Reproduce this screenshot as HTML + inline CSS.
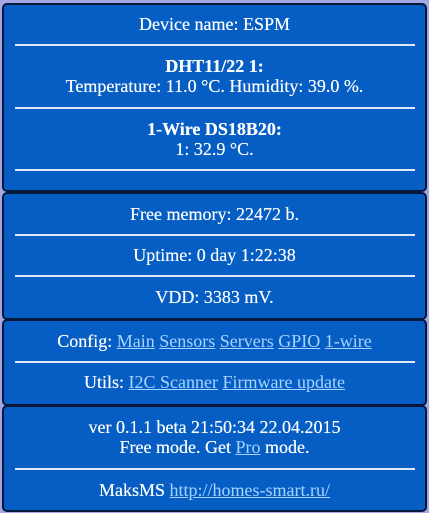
<!DOCTYPE html>
<html><head><meta charset="utf-8"><style>
body{margin:0;width:429px;height:513px;background:#a4a6e6;font-family:"Liberation Serif",serif;font-size:18px;color:#fff;position:relative;overflow:hidden}
.box{position:absolute;left:2px;width:421px;background:#065ec4;border:2px solid #061838;border-radius:5px}
.t{position:absolute;left:0;width:429px;text-align:center;line-height:20px;white-space:nowrap;text-shadow:0 0 0.4px #fff}
.hr{position:absolute;left:15px;width:400px;height:2px;background:#dfe8f4}
b{font-weight:bold}
a{color:#a6d4ff;text-decoration:underline;text-shadow:none}
</style></head><body>
<div class="box" style="top:3px;height:185px"></div>
<div class="box" style="top:192px;height:124px"></div>
<div class="box" style="top:319px;height:83px"></div>
<div class="box" style="top:405px;height:103px"></div>

<div class="t" style="top:14px">Device name: ESPM</div>
<div class="hr" style="top:44px"></div>
<div class="t" style="top:56px"><b>DHT11/22 1:</b><br>Temperature: 11.0 °C. Humidity: 39.0 %.</div>
<div class="hr" style="top:107px"></div>
<div class="t" style="top:119px"><b>1-Wire DS18B20:</b><br>1: 32.9 °C.</div>
<div class="hr" style="top:169px"></div>

<div class="t" style="top:204px">Free memory: 22472 b.</div>
<div class="hr" style="top:234px"></div>
<div class="t" style="top:245px">Uptime: 0 day 1:22:38</div>
<div class="hr" style="top:275px"></div>
<div class="t" style="top:287px">VDD: 3383 mV.</div>

<div class="t" style="top:331px">Config: <a>Main</a> <a>Sensors</a> <a>Servers</a> <a>GPIO</a> <a>1-wire</a></div>
<div class="hr" style="top:361px"></div>
<div class="t" style="top:372px">Utils: <a>I2C Scanner</a> <a>Firmware update</a></div>

<div class="t" style="top:417px">ver 0.1.1 beta 21:50:34 22.04.2015<br>Free mode. Get <a>Pro</a> mode.</div>
<div class="hr" style="top:468px"></div>
<div class="t" style="top:480px">MaksMS <a>http://homes-smart.ru/</a></div>
</body></html>
